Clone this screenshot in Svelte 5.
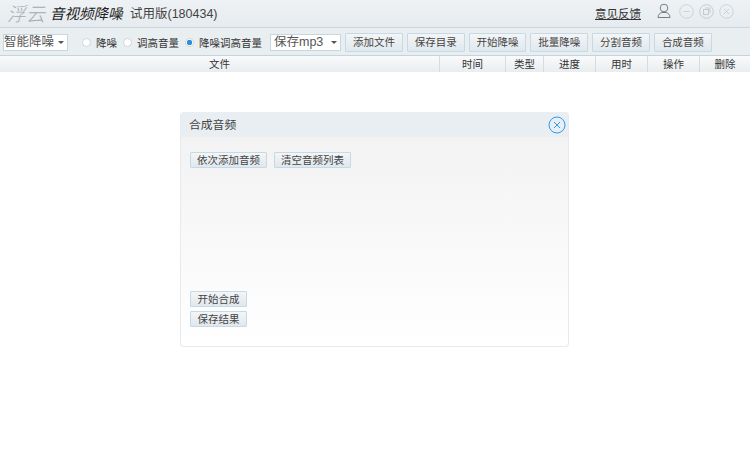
<script>
  const leftBtns = ['添加文件', '保存目录', '开始降噪', '批量降噪', '分割音频', '合成音频'];
  const cols = [
    { label: '文件', w: 440 },
    { label: '时间', w: 66 },
    { label: '类型', w: 38 },
    { label: '进度', w: 52 },
    { label: '用时', w: 52 },
    { label: '操作', w: 52 },
    { label: '删除', w: 50 }
  ];
  const radios = [
    { label: '降噪', on: false },
    { label: '调高音量', on: false },
    { label: '降噪调高音量', on: true }
  ];
</script>

<div class="page">
  <header class="title">
    <span class="logo">浮云</span>
    <span class="name">音视频降噪</span>
    <span class="ver">试用版(180434)</span>
    <span class="spacer"></span>
    <span class="feedback">意见反馈</span>
    <svg class="user" width="16" height="16" viewBox="0 0 16 16" fill="none" stroke="#777d82" stroke-width="1">
      <circle cx="8" cy="5" r="3.800" />
      <path d="M2 14.500c0-3 2-4.500 4-5h4c2 .5 4 2 4 5z" />
    </svg>
    <svg class="win" width="15" height="15" viewBox="0 0 15 15" fill="none" stroke="#ccd3d8">
      <circle cx="7.500" cy="7.500" r="6.800" /><path d="M4.500 7.500h6" />
    </svg>
    <svg class="win" width="15" height="15" viewBox="0 0 15 15" fill="none" stroke="#c4ccd1">
      <circle cx="7.500" cy="7.500" r="6.800" /><rect x="4.500" y="5.500" width="5" height="5" /><path d="M6 4h5v5" />
    </svg>
    <svg class="win" width="15" height="15" viewBox="0 0 15 15" fill="none" stroke="#ccd3d8">
      <circle cx="7.500" cy="7.500" r="6.800" /><path d="M5 5l5 5M10 5l-5 5" />
    </svg>
  </header>

  <div class="toolbar">
    <div class="select first">智能降噪<i class="caret"></i></div>
    <div class="radios">
      {#each radios as r}
        <span class="radio"><i class="dot" class:on={r.on}></i>{r.label}</span>
      {/each}
    </div>
    <div class="select second">保存mp3<i class="caret"></i></div>
    <div class="btns">
      {#each leftBtns as b}
        <button class="btn">{b}</button>
      {/each}
    </div>
  </div>

  <div class="thead">
    {#each cols as c}
      <div class="th" style="width:{c.w}px">{c.label}</div>
    {/each}
  </div>

  <main class="stage">
    <section class="dialog">
      <div class="dlg-head">
        <span class="dlg-title">合成音频</span>
        <svg width="18" height="18" viewBox="0 0 18 18" fill="none" stroke="#2f9bea">
          <circle cx="9" cy="9" r="8" /><path d="M6 6l6 6M12 6l-6 6" />
        </svg>
      </div>
      <div class="dlg-body">
        <div class="row">
          <button class="btn wide">依次添加音频</button>
          <button class="btn wide">清空音频列表</button>
        </div>
        <div class="stack">
          <button class="btn small">开始合成</button>
          <button class="btn small">保存结果</button>
        </div>
      </div>
    </section>
  </main>
</div>

<style>
  :global(body) { margin: 0; background: #fff; }
  .page {
    width: 750px; height: 459px; overflow: hidden; display: flex; flex-direction: column;
    font-family: "Liberation Sans", "Noto Sans CJK SC", sans-serif; font-size: 11px; color: #333;
  }
  .title {
    height: 28px; flex: none; display: flex; align-items: center; box-sizing: border-box;
    padding: 0 16px 3px 7px; background: linear-gradient(#eff2f4, #e5ebee);
    border-bottom: 1px solid #c9d6dd;
  }
  .logo { font-size: 19px; font-style: italic; color: #a3abb0; font-weight: 300; width: 43px; white-space: nowrap; }
  .name { font-size: 14.500px; font-style: italic; color: #222; width: 80px; white-space: nowrap; }
  .ver { font-size: 12.500px; color: #444; }
  .spacer { flex: 1; }
  .feedback { font-size: 11.500px; color: #333; text-decoration: underline; margin-right: 15px; margin-top: 2px; }
  .user { margin-right: 7px; margin-top: -2px; }
  .win { margin-right: 5px; margin-top: -2px; }
  .win:last-child { margin-right: 0; }
  .toolbar {
    height: 28px; flex: none; display: flex; align-items: center; box-sizing: border-box;
    padding: 2px 0 0 3px; background: #e9eef1; border-bottom: 1px solid #c5d3dc;
  }
  .select {
    height: 15px; background: #fff; border: 1px solid #c8d6de; white-space: nowrap;
    display: flex; align-items: center; justify-content: space-between; color: #555; padding: 0 3px 0 0;
    font-size: 12.500px; line-height: 15px;
  }
  .first { width: 60px; }
  .second { width: 63px; margin-left: 8px; padding-left: 3px; }
  .caret { flex: none; width: 0; height: 0; border: 3px solid transparent; border-top: 3.500px solid #555; border-bottom: 0; }
  .radios { display: flex; margin-left: 14px; gap: 6px; }
  .radio { display: flex; align-items: center; font-size: 10.500px; color: #333; white-space: nowrap; }
  .dot {
    width: 7px; height: 7px; border: 1px solid #cfd6da; border-radius: 50%; background: #fff; margin-right: 5px;
  }
  .dot.on { background: radial-gradient(circle, #2f8fdc 0 2.500px, #fff 3px); }
  .btns { display: flex; gap: 4px; margin-left: 4px; }
  .btn {
    width: 57.800px; height: 19px; padding: 0; font: inherit; font-size: 10.500px; line-height: 15px; color: #444;
    box-sizing: border-box; border: 1px solid #c5d9e6; border-radius: 1px; white-space: nowrap;
    background: linear-gradient(#f4f5f6, #dfe8ee);
  }
  .thead { height: 16px; flex: none; display: flex; background: linear-gradient(#f9fafb, #e9edef); }
  .th {
    box-sizing: border-box; text-align: center; font-size: 10.500px; line-height: 16px;
    border-right: 1px solid #d5dce1; white-space: nowrap;
  }
  .th:last-child { border-right: 0; }
  .stage { flex: 1; padding: 40px 0 0 180px; }
  .dialog {
    width: 389px; height: 235px; box-sizing: border-box; border: 1px solid #e6eaec; border-top: 0;
    border-radius: 4px; display: flex; flex-direction: column; overflow: hidden;
    background: linear-gradient(#f1f1f2, #fff);
  }
  .dlg-head {
    height: 25px; flex: none; display: flex; align-items: center; justify-content: space-between;
    padding: 0 2px 0 8px; background: #e8eef2; font-size: 11.800px; color: #444;
  }
  .dlg-title { margin-top: -2px; }
  .dlg-body {
    flex: 1; display: flex; flex-direction: column; justify-content: space-between;
    padding: 15px 9px 19px;
  }
  .row { display: flex; gap: 7px; }
  .stack { display: flex; flex-direction: column; gap: 4px; align-items: flex-start; }
  .dlg-body .btn { height: 16px; line-height: 14px; }
  .wide { width: 77px; }
  .small { width: 57px; }
</style>
